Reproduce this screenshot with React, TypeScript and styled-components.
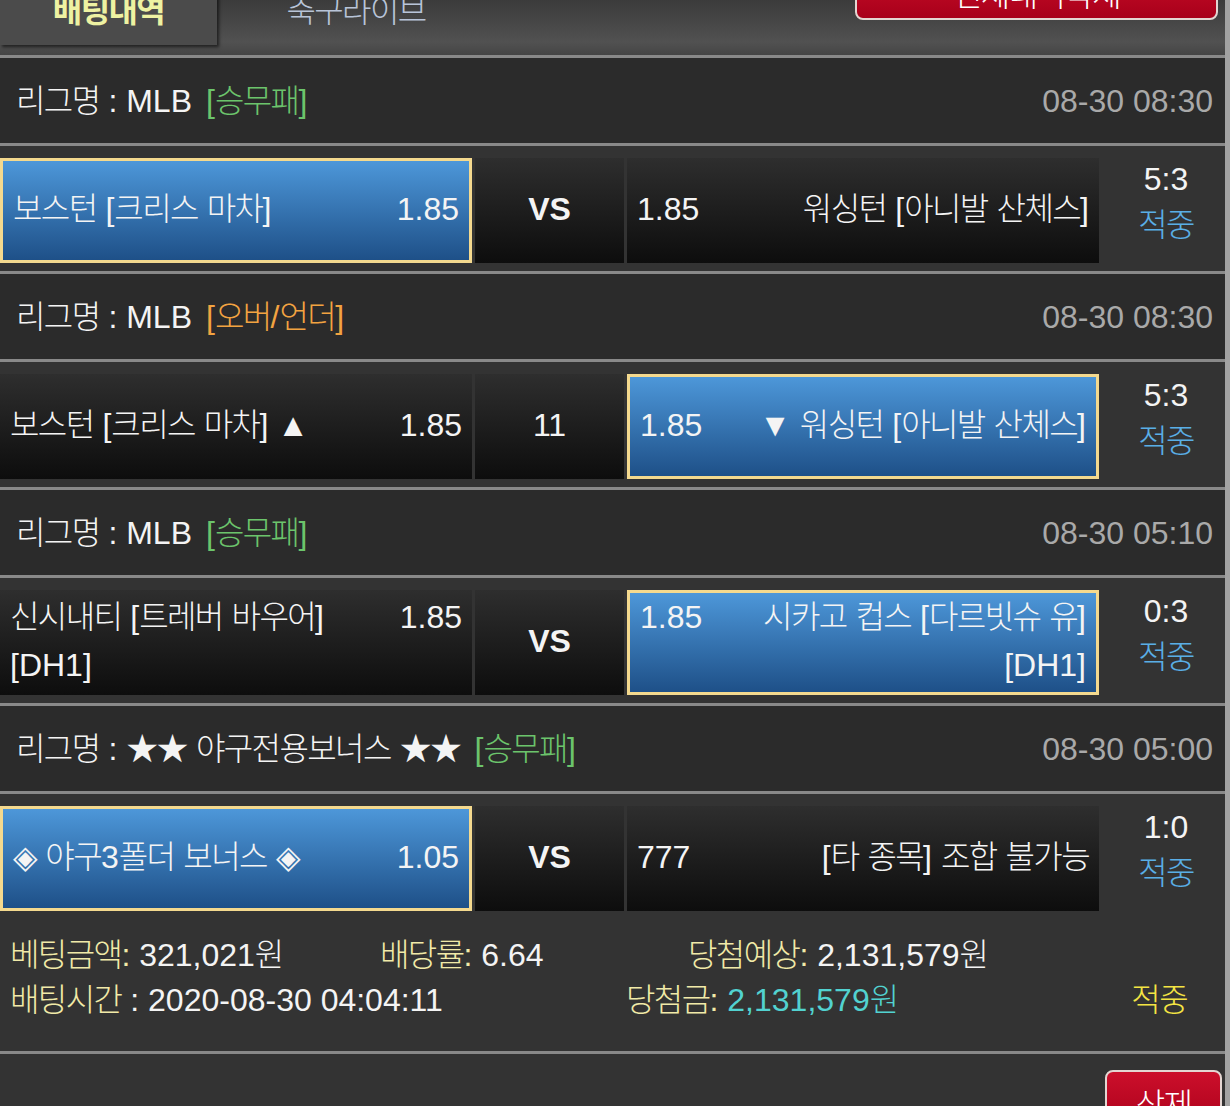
import React from "react";
import styled, { createGlobalStyle, css } from "styled-components";

const Global = createGlobalStyle`
  html, body { margin: 0; padding: 0; background: #333333; }
  body {
    font-family: "Liberation Sans", "Noto Sans CJK KR", sans-serif;
    font-size: 32px;
    color: #f4f4f4;
    overflow: hidden;
  }
  * { box-sizing: border-box; }
`;

const HANGUL = /([\uAC00-\uD7A3\u3130-\u318F★◈]+)/;

const Ko = styled.span`
  letter-spacing: -0.05em;
  font-weight: 300;
`;

const T = ({ children }: { children: string }) => (
  <>
    {children.split(HANGUL).map((part, i) =>
      i % 2 === 1 ? <Ko key={i}>{part}</Ko> : <React.Fragment key={i}>{part}</React.Fragment>
    )}
  </>
);

const Page = styled.div`
  width: 1230px;
  margin-top: -40px;
  border-right: 5px solid #a2a2a2;
  background: #333333;
`;

const TabBar = styled.div`
  height: 95px;
  display: flex;
  align-items: flex-start;
  background: linear-gradient(to bottom, #2e2e2e 0, #3b3b3b 40px, #515151 82px, #454545 95px);
`;

const Tab = styled.div<{ $active?: boolean; $w: number }>`
  width: ${(p) => p.$w}px;
  height: 85px;
  padding-top: 10px;
  display: flex;
  align-items: center;
  justify-content: center;
  ${(p) =>
    p.$active
      ? css`
          background: #4b4b4b;
          color: #eef2a2;
          font-weight: bold;
          box-shadow: 2px 2px 3px rgba(0, 0, 0, 0.6);
          ${Ko} { font-weight: bold; }
        `
      : css`
          color: #b8c4d8;
        `}
`;

const RedButton = styled.button<{ $w: number; $h: number }>`
  width: ${(p) => p.$w}px;
  height: ${(p) => p.$h}px;
  border: 2px solid #e4d6d2;
  border-radius: 8px;
  background: linear-gradient(to bottom, #cc0f2b, #a8001a);
  color: #ffffff;
  font-family: inherit;
  font-size: 32px;
  display: flex;
  align-items: center;
  justify-content: center;
  padding: 0;
`;

const TopButton = styled(RedButton)`
  margin: 4px 7px 0 auto;
`;

const Header = styled.div`
  border-top: 3px solid #898989;
  height: 88px;
  background: #2b2b2b;
  display: flex;
  align-items: center;
  justify-content: space-between;
  padding: 0 12px 0 16px;
  line-height: 48px;
`;

const Tag = styled.span<{ $color: string }>`
  margin-left: 14px;
  color: ${(p) => p.$color};
`;

const DateText = styled.span`
  color: #a9a9a9;
`;

const MatchRow = styled.div`
  border-top: 3px solid #898989;
  background: #333333;
  padding: 12px 0 8px;
  display: flex;
`;

const Cells = styled.div`
  display: flex;
  gap: 3px;
`;

const Cell = styled.div<{ $selected?: boolean; $multi?: boolean; $w: number }>`
  width: ${(p) => p.$w}px;
  height: 105px;
  padding: 0 10px;
  display: flex;
  justify-content: space-between;
  align-items: ${(p) => (p.$multi ? "flex-start" : "center")};
  padding-top: ${(p) => (p.$multi ? "3px" : "0")};
  padding-bottom: 4px;
  line-height: 48px;
  white-space: nowrap;
  ${(p) =>
    p.$selected
      ? css`
          background: linear-gradient(to bottom, #4d97d9, #1e5088);
          border: 3px solid #f4d98e;
          padding-top: ${p.$multi ? "0" : "0"};
        `
      : css`
          background: linear-gradient(to bottom, #2e2e2e, #0d0d0d);
        `}
`;

const MidCell = styled(Cell)<{ $bold?: boolean }>`
  justify-content: center;
  font-weight: ${(p) => (p.$bold ? "bold" : "normal")};
`;

const Name = styled.div<{ $right?: boolean }>`
  text-align: ${(p) => (p.$right ? "right" : "left")};
`;

const ScoreCol = styled.div`
  flex: 1;
  margin-top: -2px;
  padding-left: 8px;
  text-align: center;
  line-height: 46px;
`;

const Result = styled.div<{ $color: string }>`
  color: ${(p) => p.$color};
`;

const Summary = styled.div`
  padding: 14px 10px 28px;
  background: #333333;
  line-height: 45px;
`;

const SumRow = styled.div`
  display: flex;
  white-space: nowrap;
`;

const SumItem = styled.div<{ $w?: number }>`
  ${(p) => (p.$w ? `width: ${p.$w}px;` : "flex: 1;")}
`;

const Label = styled.span`
  color: #f1eaa8;
`;

const Value = styled.span<{ $color?: string }>`
  color: ${(p) => p.$color || "#f4f4f4"};
`;

const Status = styled.div`
  color: #f4e443;
  margin-right: 28px;
`;

const Footer = styled.div`
  border-top: 3px solid #898989;
  padding: 16px 3px 0 0;
  display: flex;
  justify-content: flex-end;
  height: 80px;
`;

type Side = { name: string[]; odds: string; selected?: boolean };
type Game = {
  league: string;
  tag: string;
  tagColor: string;
  date: string;
  home: Side;
  mid: string;
  midBold: boolean;
  away: Side;
  score: string;
};

const GREEN = "#6cc46c";
const ORANGE = "#f2a341";

const games: Game[] = [
  {
    league: "MLB",
    tag: "[승무패]",
    tagColor: GREEN,
    date: "08-30 08:30",
    home: { name: ["보스턴 [크리스 마차]"], odds: "1.85", selected: true },
    mid: "VS",
    midBold: true,
    away: { name: ["워싱턴 [아니발 산체스]"], odds: "1.85" },
    score: "5:3",
  },
  {
    league: "MLB",
    tag: "[오버/언더]",
    tagColor: ORANGE,
    date: "08-30 08:30",
    home: { name: ["보스턴 [크리스 마차] ▲"], odds: "1.85" },
    mid: "11",
    midBold: false,
    away: { name: ["▼ 워싱턴 [아니발 산체스]"], odds: "1.85", selected: true },
    score: "5:3",
  },
  {
    league: "MLB",
    tag: "[승무패]",
    tagColor: GREEN,
    date: "08-30 05:10",
    home: { name: ["신시내티 [트레버 바우어]", "[DH1]"], odds: "1.85" },
    mid: "VS",
    midBold: true,
    away: { name: ["시카고 컵스 [다르빗슈 유]", "[DH1]"], odds: "1.85", selected: true },
    score: "0:3",
  },
  {
    league: "★★ 야구전용보너스 ★★",
    tag: "[승무패]",
    tagColor: GREEN,
    date: "08-30 05:00",
    home: { name: ["◈ 야구3폴더 보너스 ◈"], odds: "1.05", selected: true },
    mid: "VS",
    midBold: true,
    away: { name: ["[타 종목] 조합 불가능"], odds: "777" },
    score: "1:0",
  },
];

const NameBlock = ({ lines, right }: { lines: string[]; right?: boolean }) => (
  <Name $right={right}>
    {lines.map((l, i) => (
      <div key={i}>
        <T>{l}</T>
      </div>
    ))}
  </Name>
);

export default function App() {
  return (
    <>
      <Global />
      <Page>
        <TabBar>
          <Tab $active $w={217}>
            <T>배팅내역</T>
          </Tab>
          <Tab $w={278}>
            <T>축구라이브</T>
          </Tab>
          <TopButton $w={363} $h={56}>
            <T>전체내역삭제</T>
          </TopButton>
        </TabBar>

        {games.map((g, i) => {
          const multi = g.home.name.length > 1 || g.away.name.length > 1;
          return (
            <React.Fragment key={i}>
              <Header>
                <span>
                  <T>{"리그명 : " + g.league}</T>
                  <Tag $color={g.tagColor}>
                    <T>{g.tag}</T>
                  </Tag>
                </span>
                <DateText>{g.date}</DateText>
              </Header>
              <MatchRow>
                <Cells>
                  <Cell $w={472} $selected={g.home.selected} $multi={multi}>
                    <NameBlock lines={g.home.name} />
                    <span>{g.home.odds}</span>
                  </Cell>
                  <MidCell $w={149} $bold={g.midBold}>
                    {g.mid}
                  </MidCell>
                  <Cell $w={472} $selected={g.away.selected} $multi={multi}>
                    <span>{g.away.odds}</span>
                    <NameBlock lines={g.away.name} right />
                  </Cell>
                </Cells>
                <ScoreCol>
                  <div>{g.score}</div>
                  <Result $color="#5aaee6">
                    <T>적중</T>
                  </Result>
                </ScoreCol>
              </MatchRow>
            </React.Fragment>
          );
        })}

        <Summary>
          <SumRow>
            <SumItem $w={370}>
              <Label>
                <T>베팅금액:</T>
              </Label>
              <Value>
                <T> 321,021원</T>
              </Value>
            </SumItem>
            <SumItem $w={308}>
              <Label>
                <T>배당률:</T>
              </Label>
              <Value> 6.64</Value>
            </SumItem>
            <SumItem>
              <Label>
                <T>당첨예상:</T>
              </Label>
              <Value>
                <T> 2,131,579원</T>
              </Value>
            </SumItem>
          </SumRow>
          <SumRow>
            <SumItem $w={616}>
              <Label>
                <T>배팅시간</T>
              </Label>
              <Value> : 2020-08-30 04:04:11</Value>
            </SumItem>
            <SumItem>
              <Label>
                <T>당첨금:</T>
              </Label>
              <Value $color="#52d2d0">
                <T> 2,131,579원</T>
              </Value>
            </SumItem>
            <Status>
              <T>적중</T>
            </Status>
          </SumRow>
        </Summary>

        <Footer>
          <RedButton $w={117} $h={64}>
            <T>삭제</T>
          </RedButton>
        </Footer>
      </Page>
    </>
  );
}
